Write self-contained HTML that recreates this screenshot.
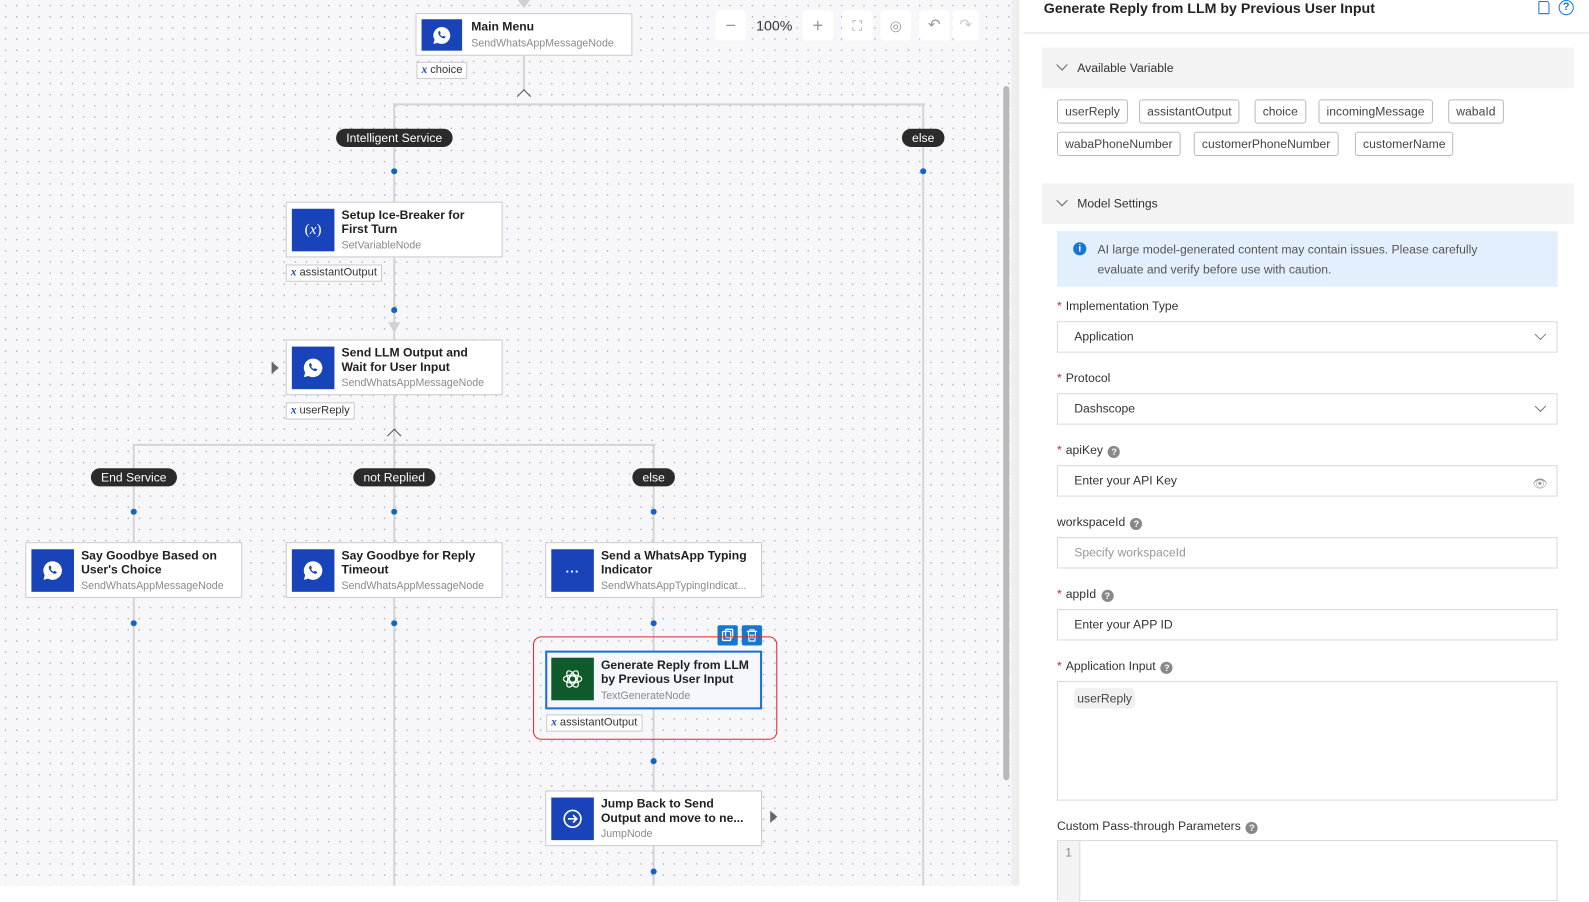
<!DOCTYPE html>
<html><head><meta charset="utf-8">
<style>
*{box-sizing:border-box;margin:0;padding:0}
html,body{width:1589px;height:886px;overflow:hidden;background:#fff;font-family:"Liberation Sans",Arial,sans-serif}
#root{position:absolute;left:0;top:0;width:1568px;height:874px;transform:scale(1.0134);transform-origin:0 0}
#canvas{position:absolute;left:0;top:0;width:998px;height:874px;background-color:#f7f7f9;background-image:radial-gradient(circle,#b4b6d4 0.7px,transparent 1px);background-size:11px 11px;overflow:hidden}
.a{position:absolute}
.vl{position:absolute;width:2px;background:#d4d4d8}
.hl{position:absolute;height:2px;background:#d4d4d8}
.dot{position:absolute;width:6px;height:6px;border-radius:50%;background:#1565c0}
.pill{position:absolute;height:18px;line-height:18px;background:#2b2b2b;color:#fff;font-size:12px;border-radius:9px;padding:0 10px;transform:translateX(-50%);white-space:nowrap}
.node{position:absolute;width:214px;height:55px;background:#fff;border:1px solid #c9c9cf}
.node .ic{position:absolute;left:5px;top:6px;width:42px;height:42px;background:#1843b9;display:flex;align-items:center;justify-content:center}
.node .t{position:absolute;left:54px;top:5px;right:14px;font-size:12px;font-weight:bold;color:#1f1f1f;line-height:14px}
.node .s{position:absolute;left:54px;bottom:5px;font-size:10.5px;color:#8a8a8a;white-space:nowrap}
.tag{position:absolute;height:17px;line-height:15px;border:1px solid #c9c9cf;background:#fff;font-size:11px;color:#333;padding:0 4px;white-space:nowrap}
.tag i{font-family:"Liberation Serif",serif;color:#1843b9;font-weight:bold;margin-right:3px}
.caret{position:absolute;width:10px;height:10px;border-left:1.6px solid #555;border-top:1.6px solid #555;transform:rotate(45deg)}
.tb{position:absolute;top:10px;width:30px;height:30px;background:#fff;border-radius:4px;color:#999;font-size:18px;text-align:center;line-height:30px}
#panel{position:absolute;left:1006px;top:0;width:562px;height:874px;background:#fff}
.lbl{position:absolute;left:37px;font-size:12px;color:#333}
.lbl b{color:#e02020;font-weight:normal;margin-right:4px}
.q{display:inline-block;width:12px;height:12px;border-radius:50%;background:#888;color:#fff;font-size:9px;line-height:12px;text-align:center;font-weight:bold;margin-left:5px;vertical-align:-1px}
.inp{position:absolute;left:37px;width:494px;height:31px;border:1px solid #d9d9d9;font-size:12px;color:#333;padding-left:16px;line-height:29px}
.vt{position:absolute;height:24px;line-height:22px;border:1px solid #bbb;border-radius:3px;font-size:12px;color:#444;padding:0 7px}
.sec{position:absolute;left:22px;width:525px;height:40px;background:#f3f3f3;font-size:12px;color:#333;line-height:40px;padding-left:35px}
.chev{position:absolute;left:16px;top:13px;width:8px;height:8px;border-right:1.5px solid #666;border-bottom:1.5px solid #666;transform:rotate(45deg)}
</style></head><body><div id="root">
<div id="canvas">
<div class="vl" style="left:516px;top:0;height:6px"></div>
<div class="vl" style="left:516px;top:54px;height:36px"></div>
<div class="hl" style="left:388px;top:102px;width:525px"></div>
<div class="vl" style="left:388px;top:102px;height:97px"></div>
<div class="vl" style="left:910px;top:102px;height:772px"></div>
<div class="vl" style="left:388px;top:254px;height:81px"></div>
<div class="vl" style="left:388px;top:390px;height:484px"></div>
<div class="hl" style="left:131px;top:438px;width:516px"></div>
<div class="vl" style="left:131px;top:438px;height:436px"></div>
<div class="vl" style="left:644px;top:438px;height:436px"></div>
<div class="caret" style="left:512px;top:90px"></div>
<div class="caret" style="left:384px;top:425px"></div>
<div class="a" style="left:383px;top:318px;width:0;height:0;border-left:6px solid transparent;border-right:6px solid transparent;border-top:10px solid #d0d0d4"></div>
<div class="a" style="left:511px;top:0;width:0;height:0;border-left:6px solid transparent;border-right:6px solid transparent;border-top:8px solid #d0d0d4"></div>
<div class="pill" style="left:389px;top:127px">Intelligent Service</div>
<div class="pill" style="left:911px;top:127px">else</div>
<div class="pill" style="left:132px;top:462px">End Service</div>
<div class="pill" style="left:389px;top:462px">not Replied</div>
<div class="pill" style="left:645px;top:462px">else</div>
<div class="dot" style="left:386px;top:166px"></div>
<div class="dot" style="left:908px;top:166px"></div>
<div class="dot" style="left:386px;top:303px"></div>
<div class="dot" style="left:129px;top:502px"></div>
<div class="dot" style="left:386px;top:502px"></div>
<div class="dot" style="left:642px;top:502px"></div>
<div class="dot" style="left:129px;top:612px"></div>
<div class="dot" style="left:386px;top:612px"></div>
<div class="dot" style="left:642px;top:612px"></div>
<div class="dot" style="left:642px;top:748px"></div>
<div class="dot" style="left:642px;top:857px"></div>
<div class="node" style="left:410px;top:13px;height:42px"><div class="ic" style="top:5px;height:31px;width:40px"><svg width="20" height="20" viewBox="0 0 24 24"><path d="M12 2a10 10 0 0 0-8.6 15.1L2 22l5-1.3A10 10 0 1 0 12 2z" fill="#fff"/><path d="M8.5 7c.3-.4 1-.4 1.2 0l.9 2c.1.3 0 .6-.2.8l-.6.6c.6 1.3 1.6 2.3 2.9 2.9l.6-.6c.2-.2.5-.3.8-.2l2 .9c.4.2.4.9 0 1.2-.9.8-2 1.1-3.1.6-2.300-1-4.1-2.8-5.1-5.1-.5-1.1-.2-2.3.6-3.1z" fill="#1843b9"/></svg></div><div class="t" style="left:54px;top:5px">Main Menu</div><div class="s" style="bottom:5px">SendWhatsAppMessageNode</div></div>
<div class="tag" style="left:411px;top:61px"><i>x</i>choice</div>
<div class="node" style="left:282px;top:199px"><div class="ic"><span style="color:#fff;font-size:15px;font-family:'Liberation Serif',serif">(<i>x</i>)</span></div><div class="t" style="right:28px">Setup Ice-Breaker for First Turn</div><div class="s">SetVariableNode</div></div>
<div class="tag" style="left:282px;top:261px"><i>x</i>assistantOutput</div>
<div class="a" style="left:268px;top:357px;border-top:6px solid transparent;border-bottom:6px solid transparent;border-left:7px solid #666"></div>
<div class="node" style="left:282px;top:335px"><div class="ic"><svg width="22" height="22" viewBox="0 0 24 24"><path d="M12 2a10 10 0 0 0-8.6 15.1L2 22l5-1.3A10 10 0 1 0 12 2z" fill="#fff"/><path d="M8.5 7c.3-.4 1-.4 1.2 0l.9 2c.1.3 0 .6-.2.8l-.6.6c.6 1.3 1.6 2.3 2.9 2.9l.6-.6c.2-.2.5-.3.8-.2l2 .9c.4.2.4.9 0 1.2-.9.8-2 1.1-3.1.6-2.3-1-4.1-2.8-5.1-5.1-.5-1.1-.2-2.3.6-3.1z" fill="#1843b9"/></svg></div><div class="t">Send LLM Output and Wait for User Input</div><div class="s">SendWhatsAppMessageNode</div></div>
<div class="tag" style="left:282px;top:397px"><i>x</i>userReply</div>
<div class="node" style="left:25px;top:535px"><div class="ic"><svg width="22" height="22" viewBox="0 0 24 24"><path d="M12 2a10 10 0 0 0-8.6 15.1L2 22l5-1.3A10 10 0 1 0 12 2z" fill="#fff"/><path d="M8.5 7c.3-.4 1-.4 1.2 0l.9 2c.1.3 0 .6-.2.8l-.6.6c.6 1.3 1.6 2.3 2.9 2.9l.6-.6c.2-.2.5-.3.8-.2l2 .9c.4.2.4.9 0 1.2-.9.8-2 1.1-3.1.6-2.3-1-4.1-2.8-5.1-5.1-.5-1.1-.2-2.3.6-3.1z" fill="#1843b9"/></svg></div><div class="t">Say Goodbye Based on User's Choice</div><div class="s">SendWhatsAppMessageNode</div></div>
<div class="node" style="left:282px;top:535px"><div class="ic"><svg width="22" height="22" viewBox="0 0 24 24"><path d="M12 2a10 10 0 0 0-8.6 15.1L2 22l5-1.3A10 10 0 1 0 12 2z" fill="#fff"/><path d="M8.5 7c.3-.4 1-.4 1.2 0l.9 2c.1.3 0 .6-.2.8l-.6.6c.6 1.3 1.6 2.3 2.9 2.9l.6-.6c.2-.2.5-.3.8-.2l2 .9c.4.2.4.9 0 1.2-.9.8-2 1.1-3.1.6-2.3-1-4.1-2.8-5.1-5.1-.5-1.1-.2-2.3.6-3.1z" fill="#1843b9"/></svg></div><div class="t">Say Goodbye for Reply Timeout</div><div class="s">SendWhatsAppMessageNode</div></div>
<div class="node" style="left:538px;top:535px"><div class="ic"><span style="color:#fff;font-size:13px;font-weight:bold;letter-spacing:1px;margin-top:-6px">...</span></div><div class="t">Send a WhatsApp Typing Indicator</div><div class="s">SendWhatsAppTypingIndicat...</div></div>
<div class="a" style="left:708px;top:617px;width:20px;height:20px;background:#1677d2;border-radius:2px"><svg width="20" height="20" viewBox="0 0 20 20"><rect x="5" y="6" width="8" height="9" rx="1" fill="none" stroke="#fff" stroke-width="1.3"/><rect x="8" y="4" width="7" height="8" rx="1" fill="none" stroke="#fff" stroke-width="1.3"/></svg></div>
<div class="a" style="left:732px;top:617px;width:20px;height:20px;background:#1677d2;border-radius:2px"><svg width="20" height="20" viewBox="0 0 20 20"><path d="M5 6h10M8 6V4.5h4V6M6.5 6.5l.6 9h5.8l.6-9M9 9v4M11 9v4" fill="none" stroke="#fff" stroke-width="1.2"/></svg></div>
<div class="a" style="left:526px;top:628px;width:241px;height:102px;border:1.6px solid #e8202a;border-radius:8px"></div>
<div class="node" style="left:538px;top:642px;height:58px;border:2px solid #1a6fd4;background:#f6f7fc"><div class="ic" style="left:4px;top:5px;background:#0f5a2a"><svg width="24" height="24" viewBox="0 0 24 24" fill="none" stroke="#fff" stroke-width="1.2"><circle cx="12" cy="12" r="3.2"/><ellipse cx="12" cy="12" rx="9" ry="4" /><ellipse cx="12" cy="12" rx="9" ry="4" transform="rotate(60 12 12)"/><ellipse cx="12" cy="12" rx="9" ry="4" transform="rotate(120 12 12)"/></svg></div><div class="t" style="left:53px;top:5px;right:2px">Generate Reply from LLM by Previous User Input</div><div class="s" style="left:53px;bottom:5px">TextGenerateNode</div></div>
<div class="tag" style="left:539px;top:705px"><i>x</i>assistantOutput</div>
<div class="node" style="left:538px;top:780px"><div class="ic"><svg width="22" height="22" viewBox="0 0 24 24" fill="none" stroke="#fff" stroke-width="1.8"><circle cx="12" cy="12" r="9"/><path d="M7 12h9M12.5 8l4 4-4 4"/></svg></div><div class="t">Jump Back to Send Output and move to ne...</div><div class="s">JumpNode</div></div>
<div class="a" style="left:760px;top:800px;border-top:6px solid transparent;border-bottom:6px solid transparent;border-left:7px solid #666"></div>
<div class="tb" style="left:706px">−</div>
<div class="a" style="left:740px;top:10px;width:48px;height:30px;line-height:30px;font-size:14px;color:#333;text-align:center">100%</div>
<div class="tb" style="left:792px">+</div>
<div class="tb" style="left:831px;font-size:14px">⛶</div>
<div class="tb" style="left:869px;font-size:14px">◎</div>
<div class="tb" style="left:907px;font-size:15px">↶</div>
<div class="tb" style="left:940px;width:26px;font-size:15px;color:#ccc">↷</div>
<div class="a" style="left:990px;top:85px;width:6px;height:685px;background:#b8b8b8;border-radius:3px"></div>
</div>
<div class="a" style="left:998px;top:0;width:8px;height:874px;background:#eeeeef"></div>
<div id="panel">
<div class="a" style="left:24px;top:0;font-size:14px;font-weight:bold;color:#222">Generate Reply from LLM by Previous User Input</div>
<div class="a" style="left:512px;top:1px;width:11px;height:13px;border:1.6px solid #1677d2;border-radius:1px 3px 1px 1px"></div>
<div class="a" style="left:532px;top:0;width:15px;height:15px;border:1.6px solid #1677d2;border-radius:50%;color:#1677d2;font-size:11px;font-weight:bold;text-align:center;line-height:12px">?</div>
<div class="a" style="left:4px;top:32px;width:558px;height:1px;background:#ddd"></div>
<div class="sec" style="top:47px"><span class="chev"></span>Available Variable</div>
<div class="vt" style="left:37px;top:98px">userReply</div>
<div class="vt" style="left:118px;top:98px">assistantOutput</div>
<div class="vt" style="left:232px;top:98px">choice</div>
<div class="vt" style="left:295px;top:98px">incomingMessage</div>
<div class="vt" style="left:423px;top:98px">wabaId</div>
<div class="vt" style="left:37px;top:130px">wabaPhoneNumber</div>
<div class="vt" style="left:172px;top:130px">customerPhoneNumber</div>
<div class="vt" style="left:331px;top:130px">customerName</div>
<div class="sec" style="top:181px"><span class="chev"></span>Model Settings</div>
<div class="a" style="left:37px;top:228px;width:494px;height:55px;background:#e3effc;font-size:12px;color:#555;line-height:20px;padding:8px 58px 0 40px">
<span class="a" style="left:16px;top:11px;width:13px;height:13px;border-radius:50%;background:#1677d2;color:#fff;font-size:10px;font-weight:bold;text-align:center;line-height:13px">i</span>
AI large model-generated content may contain issues. Please carefully evaluate and verify before use with caution.</div>
<div class="lbl" style="top:295px"><b>*</b>Implementation Type</div>
<div class="inp" style="top:317px">Application<span class="a" style="right:12px;top:8px;width:8px;height:8px;border-right:1.3px solid #777;border-bottom:1.3px solid #777;transform:rotate(45deg)"></span></div>
<div class="lbl" style="top:366px"><b>*</b>Protocol</div>
<div class="inp" style="top:388px">Dashscope<span class="a" style="right:12px;top:8px;width:8px;height:8px;border-right:1.3px solid #777;border-bottom:1.3px solid #777;transform:rotate(45deg)"></span></div>
<div class="lbl" style="top:437px"><b>*</b>apiKey<span class="q">?</span></div>
<div class="inp" style="top:459px">Enter your API Key<span class="a" style="right:9px;top:3px;font-size:12px;color:#999">👁</span></div>
<div class="lbl" style="top:508px">workspaceId<span class="q">?</span></div>
<div class="inp" style="top:530px;color:#999">Specify workspaceId</div>
<div class="lbl" style="top:579px"><b>*</b>appId<span class="q">?</span></div>
<div class="inp" style="top:601px">Enter your APP ID</div>
<div class="lbl" style="top:650px"><b>*</b>Application Input<span class="q">?</span></div>
<div class="inp" style="top:672px;height:118px;padding:0">
<span class="a" style="left:16px;top:6px;height:20px;line-height:20px;background:#f0f0f0;border-radius:4px;padding:0 3px;color:#444">userReply</span></div>
<div class="lbl" style="top:808px">Custom Pass-through Parameters<span class="q">?</span></div>
<div class="inp" style="top:829px;height:60px;padding:0"><span class="a" style="left:0;top:0;width:22px;height:60px;background:#f3f3f3;border-right:1px solid #ddd;color:#888;text-align:center;line-height:22px">1</span></div>
</div>
</div></body></html>
